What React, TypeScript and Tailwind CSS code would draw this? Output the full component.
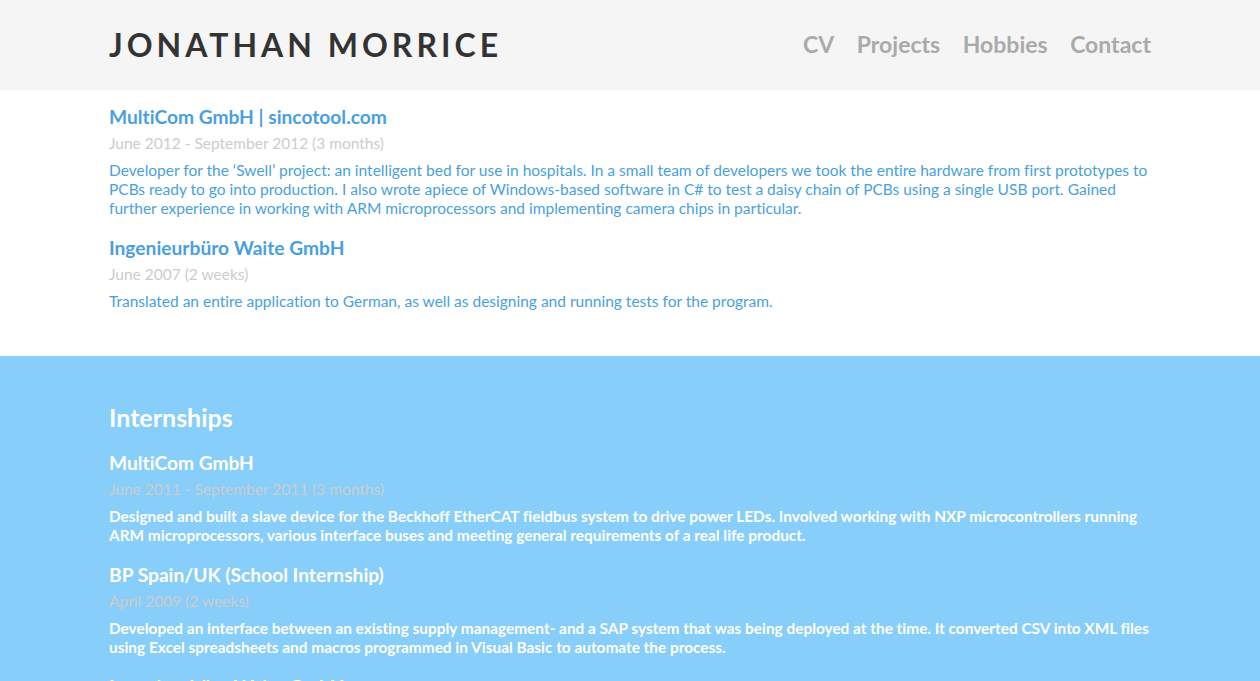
import React from "react";

const font = { fontFamily: "Lato, 'Open Sans', sans-serif" };

type Entry = { title: string; date: string; desc: string };

function Item({ e, dark }: { e: Entry; dark?: boolean }) {
  return (
    <div className="mb-[19px]">
      <h3 className={`text-[19.2px] leading-[22px] font-bold ${dark ? "text-white" : "text-[#4a9fe0]"}`}>{e.title}</h3>
      <div className="mt-[6px] text-[15.5px] leading-[19px] text-[#cccccc]">{e.date}</div>
      <p
        className={`mt-[8px] leading-[19px] ${dark ? "text-[15.4px] text-white font-bold" : "text-[15.5px] text-[#4a9fe0]"}`}
      >
        {e.desc}
      </p>
    </div>
  );
}

export default function App() {
  const work: Entry[] = [
    {
      title: "MultiCom GmbH | sincotool.com",
      date: "June 2012 - September 2012 (3 months)",
      desc: "Developer for the \u2018Swell\u2019 project: an intelligent bed for use in hospitals. In a small team of developers we took the entire hardware from first prototypes to PCBs ready to go into production. I also wrote apiece of Windows-based software in C# to test a daisy chain of PCBs using a single USB port. Gained further experience in working with ARM microprocessors and implementing camera chips in particular.",
    },
    {
      title: "Ingenieurbüro Waite GmbH",
      date: "June 2007 (2 weeks)",
      desc: "Translated an entire application to German, as well as designing and running tests for the program.",
    },
  ];
  const intern: Entry[] = [
    {
      title: "MultiCom GmbH",
      date: "June 2011 - September 2011 (3 months)",
      desc: "Designed and built a slave device for the Beckhoff EtherCAT fieldbus system to drive power LEDs. Involved working with NXP microcontrollers running ARM microprocessors, various interface buses and meeting general requirements of a real life product.",
    },
    {
      title: "BP Spain/UK (School Internship)",
      date: "April 2009 (2 weeks)",
      desc: "Developed an interface between an existing supply management- and a SAP system that was being deployed at the time. It converted CSV into XML files using Excel spreadsheets and macros programmed in Visual Basic to automate the process.",
    },
    {
      title: "Ingenieurbüro Waite GmbH",
      date: "June 2007 (2 weeks)",
      desc: "Translated an entire application to German, as well as designing and running tests for the program.",
    },
  ];
  return (
    <div style={font} className="min-h-[681px] bg-white [font-variant-ligatures:none]">
      <header className="h-[90px] bg-[#f5f5f5]">
        <div className="mx-auto flex h-full w-[1042px] items-center justify-between">
          <div className="text-[32px] font-bold tracking-[4px] text-[#333333]">JONATHAN MORRICE</div>
          <nav className="flex gap-[22.5px] pl-[2px] text-[23px] font-bold text-[#aaaaaa] -mt-[2px]">
            <span>CV</span>
            <span>Projects</span>
            <span>Hobbies</span>
            <span>Contact</span>
          </nav>
        </div>
      </header>
      <section className="pt-[16px] pb-[26px]">
        <div className="mx-auto w-[1042px]">
          {work.map((e, i) => (
            <Item key={i} e={e} />
          ))}
        </div>
      </section>
      <section className="bg-[#87cefa] pt-[47px] pb-[40px]">
        <div className="mx-auto w-[1042px]">
          <h2 className="mb-[21px] text-[25px] leading-[28px] font-bold text-white">Internships</h2>
          {intern.map((e, i) => (
            <Item key={i} e={e} dark />
          ))}
        </div>
      </section>
    </div>
  );
}
